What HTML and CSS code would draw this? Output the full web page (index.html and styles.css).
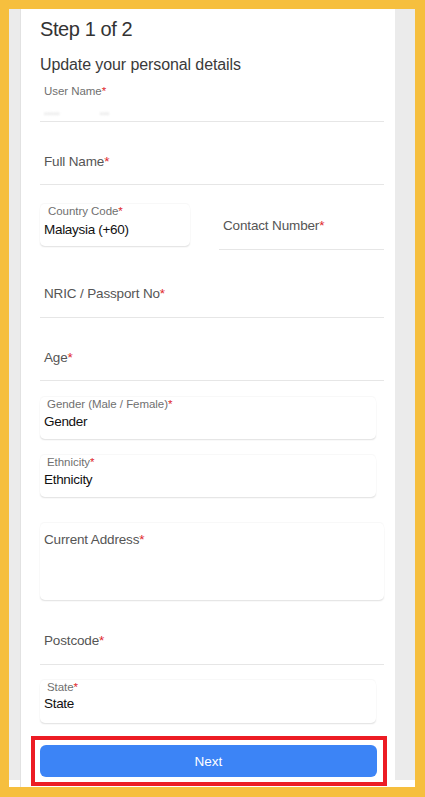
FILE: index.html
```html
<!DOCTYPE html>
<html lang="en">
<head>
    <meta charset="UTF-8">
    <meta name="viewport" content="width=device-width, initial-scale=1.0">
    <title>Update your personal details</title>
    <link rel="stylesheet" href="styles.css">
</head>
<body>
    <div class="frame">
        <div class="side"></div>
        <main class="form">
            <h1 class="step">Step 1 of 2</h1>
            <h2 class="subtitle">Update your personal details</h2>

            <div class="line-field f-user">
                <div class="label-small">User Name<b>*</b></div>
                <div class="masked"><span>&bull;&bull;&bull;&bull;&bull;</span><span>&bull;&bull;&bull;</span></div>
            </div>

            <div class="line-field f-name">
                <div class="label">Full Name<b>*</b></div>
            </div>

            <div class="row">
                <div class="card f-country">
                    <div class="label-small">Country Code<b>*</b></div>
                    <div class="value">Malaysia (+60)</div>
                </div>
                <div class="line-field f-contact">
                    <div class="label">Contact Number<b>*</b></div>
                </div>
            </div>

            <div class="line-field f-nric">
                <div class="label">NRIC / Passport No<b>*</b></div>
            </div>

            <div class="line-field f-age">
                <div class="label">Age<b>*</b></div>
            </div>

            <div class="card f-select f-gender">
                <div class="label-small">Gender (Male / Female)<b>*</b></div>
                <div class="value">Gender</div>
            </div>

            <div class="card f-select f-ethnicity">
                <div class="label-small">Ethnicity<b>*</b></div>
                <div class="value">Ethnicity</div>
            </div>

            <div class="card f-address">
                <div class="label">Current Address<b>*</b></div>
            </div>

            <div class="line-field f-postcode">
                <div class="label">Postcode<b>*</b></div>
            </div>

            <div class="card f-select f-state">
                <div class="label-small">State<b>*</b></div>
                <div class="value">State</div>
            </div>

            <div class="highlight">
                <button class="next-btn" type="button">Next</button>
            </div>
        </main>
        <div class="side"></div>
    </div>
</body>
</html>
```

FILE: styles.css
```css
* {
    box-sizing: border-box;
}
body {
    margin: 0;
    padding: 9px 10px 10px 9px;
    width: 425px;
    height: 797px;
    overflow: hidden;
    background: #f6bf3e;
    font-family: "Liberation Sans", Arial, sans-serif;
}
.frame {
    display: grid;
    grid-template-columns: 12px 374px 20px;
    height: 778px;
    background: linear-gradient(#ebebeb, #ebebeb) top / 100% 771px no-repeat, #fff;
}
.form {
    background: #fff;
    padding: 8px 11px 0 19px;
    box-shadow: -1px 0 0 #e2e2e2;
}
.step {
    margin: 0;
    font-size: 20px;
    line-height: 24px;
    font-weight: normal;
    letter-spacing: -0.4px;
    color: #333;
}
.subtitle {
    margin: 14px 0 0;
    font-size: 16px;
    line-height: 20px;
    font-weight: normal;
    letter-spacing: -0.1px;
    color: #3a3a3a;
}
b {
    color: #e0262b;
    font-weight: normal;
}
.label {
    font-size: 13.5px;
    line-height: 16px;
    letter-spacing: -0.15px;
    color: #555;
}
.label-small {
    font-size: 11.5px;
    line-height: 14px;
    letter-spacing: -0.05px;
    color: #707070;
}
.value {
    font-size: 13.5px;
    line-height: 16px;
    letter-spacing: -0.3px;
    color: #111;
    padding-left: 4px;
}
.line-field {
    border-bottom: 1px solid #e6e6e6;
    padding-left: 4px;
}
.f-user {
    margin-top: 9px;
    padding-bottom: 2px;
}
.masked {
    display: flex;
    gap: 40px;
    margin-top: 11px;
    font-size: 9px;
    line-height: 10px;
    color: #e4e4e4;
    filter: blur(1.2px);
}
.f-name {
    padding-top: 32px;
    padding-bottom: 14px;
}
.row {
    display: flex;
    align-items: flex-start;
    gap: 29px;
    padding-top: 19px;
}
.card {
    border-radius: 5px;
    box-shadow: 0 1.5px 1.5px -0.5px rgba(0, 0, 0, 0.12), 0 -1px 1px -0.5px rgba(0, 0, 0, 0.03);
}
.card .label-small {
    padding-left: 7px;
}
.f-country {
    width: 150px;
    padding-bottom: 8px;
}
.f-country .label-small {
    padding-left: 8px;
}
.f-country .value {
    margin-top: 4px;
}
.f-contact {
    flex: 1;
    padding-top: 14px;
    padding-bottom: 15px;
}
.f-nric {
    padding-top: 36px;
    padding-bottom: 15px;
}
.f-age {
    padding-top: 32px;
    padding-bottom: 14px;
}
.f-select {
    width: 336px;
    padding-bottom: 9px;
}
.f-select .value {
    margin-top: 3px;
}
.f-gender,
.f-ethnicity {
    margin-top: 16px;
}
.f-address {
    margin-top: 26px;
    padding: 9px 0 52px 4px;
}
.f-postcode {
    padding-top: 33px;
    padding-bottom: 15px;
}
.f-state {
    margin-top: 15px;
    padding-bottom: 11px;
}
.f-state .value {
    margin-top: 2px;
}
.highlight {
    margin: 13px -3px 0 -9px;
    border: 4px solid #ec1c24;
    padding: 5px 6px 5px 5px;
    background: #fff;
}
.next-btn {
    display: block;
    width: 100%;
    height: 32px;
    border: none;
    border-radius: 6px;
    background: #3c84f6;
    color: #fff;
    font-family: inherit;
    font-size: 13.5px;
    cursor: pointer;
}
```
